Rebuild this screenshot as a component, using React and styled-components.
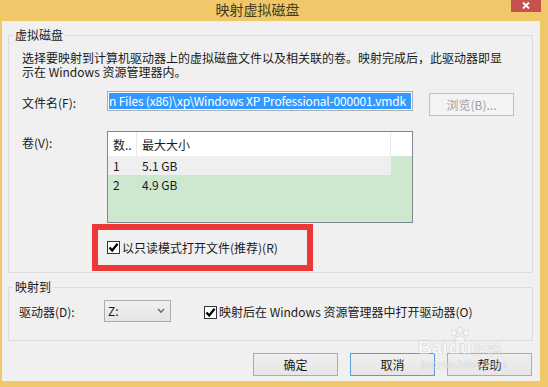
import React from 'react';
import styled, { createGlobalStyle } from 'styled-components';

const Global = createGlobalStyle`
  * { box-sizing: border-box; }
  html, body { margin: 0; padding: 0; width: 548px; height: 387px; overflow: hidden; background: #F0C869; }
  body {
    font-family: "Noto Sans CJK SC", "Noto Sans", sans-serif;
    font-size: 12px;
    color: #1a1a1a;
  }
`;

const Window = styled.div`
  position: relative;
  width: 548px;
  height: 387px;
  background: #F0C869;
  display: flex;
  flex-direction: column;
`;

const TitleBar = styled.div`
  height: 21px;
  flex: none;
  display: flex;
  align-items: flex-start;
  padding-right: 7px;
`;

const Title = styled.div`
  flex: 1;
  text-align: center;
  padding-left: 4px;
  font-size: 14px;
  line-height: 18px;
  color: #45391f;
`;

const CloseButton = styled.div`
  width: 30px;
  height: 12px;
  background: #C75050;
  display: flex;
  align-items: flex-start;
  justify-content: center;
  padding-top: 2px;
`;

const Body = styled.div`
  flex: 1;
  margin: 0 8px 6px 2px;
  background: #F0F0F0;
  padding: 6px 7px 0 6px;
  display: flex;
  flex-direction: column;
`;

const Group = styled.fieldset`
  margin: ${p => p.$mt || 0}px 0 0 0;
  padding: 0;
  border: 1px solid #DCDCDC;
  min-width: 0;
`;

const Legend = styled.legend`
  margin-left: 4px;
  padding: 0 2px;
  font-size: 12px;
  line-height: 16px;
  color: #1a1a1a;
`;

const GroupInner = styled.div`
  padding: ${p => p.$pad};
  display: flex;
  flex-direction: column;
`;

const Description = styled.div`
  line-height: 14px;
  margin-bottom: 12px;
`;

const FieldRow = styled.div`
  display: flex;
  align-items: flex-start;
  margin-bottom: ${p => p.$mb || 0}px;
`;

const FieldLabel = styled.div`
  width: ${p => p.$w}px;
  flex: none;
  line-height: 16px;
  margin-top: ${p => p.$mt || 0}px;
`;

const TextInput = styled.div`
  width: 306px;
  height: 20px;
  border: 1px solid #ABADB3;
  background: #fff;
  padding: 1px;
  overflow: hidden;
`;

const Selection = styled.div`
  height: 16px;
  background: #3399FF;
  color: #fff;
  white-space: nowrap;
  overflow: hidden;
  line-height: 16px;
  letter-spacing: -0.18px;
`;

const PushButton = styled.div`
  width: 85px;
  height: 23px;
  flex: none;
  border: 1px solid ${p => (p.$focused ? '#569DE5' : p.$disabled ? '#BFBFBF' : '#ACACAC')};
  background: ${p => (p.$disabled ? '#F4F4F4' : 'linear-gradient(#F0F0F0, #E5E5E5)')};
  color: ${p => (p.$disabled ? '#A0A0A0' : '#1a1a1a')};
  display: flex;
  align-items: center;
  justify-content: center;
  line-height: 16px;
  margin-left: ${p => p.$ml || 0}px;
  margin-top: ${p => p.$mt || 0}px;
`;

const ListBox = styled.div`
  width: 306px;
  height: 92px;
  border: 1px solid #828790;
  background: #CDE8CF;
  display: flex;
  flex-direction: column;
`;

const ListHeader = styled.div`
  height: 24px;
  background: #fff;
  display: flex;
  flex: none;
`;

const HeaderCell = styled.div`
  width: ${p => p.$w}px;
  flex: ${p => (p.$w ? 'none' : '1')};
  padding: 5px 0 0 5px;
  line-height: 16px;
  border-right: ${p => (p.$last ? 'none' : '1px solid #E8E8E8')};
  white-space: nowrap;
`;

const ListRow = styled.div`
  width: 283px;
  height: 19px;
  display: flex;
  line-height: 19px;
  background: ${p => (p.$selected ? '#EFEFEF' : 'transparent')};
`;

const Cell = styled.div`
  width: ${p => p.$w}px;
  padding-left: 5px;
  flex: none;
`;

const Highlight = styled.div`
  width: 221px;
  height: 47px;
  margin: 1px 0 1px 70px;
  border: 6px solid #EE3838;
  display: flex;
  align-items: center;
  padding-left: 9px;
`;

const CheckRow = styled.label`
  display: flex;
  align-items: center;
  gap: 2px;
  line-height: 16px;
  margin-left: ${p => p.$ml || 0}px;
  margin-top: ${p => p.$mt || 0}px;
`;

const Box = styled.span`
  width: 13px;
  height: 13px;
  border: 1px solid #333;
  background: #fff;
  display: inline-flex;
  align-items: center;
  justify-content: center;
  flex: none;
`;

const Combo = styled.div`
  width: 67px;
  height: 22px;
  border: 1px solid #ACACAC;
  background: linear-gradient(#F0F0F0, #E5E5E5);
  display: flex;
  align-items: center;
  justify-content: space-between;
  padding: 0 5px 0 3px;
  line-height: 16px;
`;

const ButtonRow = styled.div`
  display: flex;
  justify-content: flex-end;
  gap: 12px;
  margin-top: 12px;
  padding-right: 1px;
`;

const Watermark = styled.div`
  position: absolute;
  left: 418px;
  top: 325px;
  width: 110px;
  height: 50px;
  opacity: 0.45;
  pointer-events: none;
  font-family: "Liberation Sans", Arial, sans-serif;
  color: #fff;
  text-shadow: 0 0 1px #9a9a9a, 0 0 1px #9a9a9a;
`;

const WmLogo = styled.div`
  display: flex;
  align-items: flex-end;
  height: 34px;
  font-weight: bold;
  font-size: 19px;
  line-height: 22px;
`;

const WmCn = styled.span`
  font-family: "Noto Sans CJK SC", sans-serif;
  font-size: 14px;
  font-weight: normal;
  margin-left: 2px;
  line-height: 20px;
`;

const WmUrl = styled.div`
  font-size: 10px;
  line-height: 12px;
  padding-left: 3px;
  letter-spacing: 0.3px;
`;

const Check = () => (
  <Box>
    <svg width="11" height="11" viewBox="0 0 11 11">
      <path d="M1.5 5.5 L4.2 8.5 L9.6 1.8" stroke="#000" strokeWidth="2.2" fill="none" />
    </svg>
  </Box>
);

export default function App() {
  return (
    <>
      <Global />
      <Window>
        <TitleBar>
          <Title>映射虚拟磁盘</Title>
          <CloseButton>
            <svg width="8" height="7" viewBox="0 0 8 7">
              <path d="M1 0.5 L7 6.5 M7 0.5 L1 6.5" stroke="#fff" strokeWidth="1.8" />
            </svg>
          </CloseButton>
        </TitleBar>
        <Body>
          <Group>
            <Legend>虚拟磁盘</Legend>
            <GroupInner $pad="8px 0 0 13px">
              <Description>
                选择要映射到计算机驱动器上的虚拟磁盘文件以及相关联的卷。映射完成后，此驱动器即显
                <br />
                示在 Windows 资源管理器内。
              </Description>
              <FieldRow $mb={15}>
                <FieldLabel $w={85} $mt={4}>文件名(F):</FieldLabel>
                <TextInput>
                  <Selection>n Files (x86)\xp\Windows XP Professional-000001.vmdk</Selection>
                </TextInput>
                <PushButton $disabled $ml={16} $mt={2}>浏览(B)...</PushButton>
              </FieldRow>
              <FieldRow>
                <FieldLabel $w={85} $mt={4}>卷(V):</FieldLabel>
                <ListBox>
                  <ListHeader>
                    <HeaderCell $w={29}>数..</HeaderCell>
                    <HeaderCell $w={254}>最大大小</HeaderCell>
                    <HeaderCell $last />
                  </ListHeader>
                  <ListRow $selected>
                    <Cell $w={29}>1</Cell>
                    <Cell $w={254}>5.1 GB</Cell>
                  </ListRow>
                  <ListRow>
                    <Cell $w={29}>2</Cell>
                    <Cell $w={254}>4.9 GB</Cell>
                  </ListRow>
                </ListBox>
              </FieldRow>
              <Highlight>
                <CheckRow>
                  <Check />
                  以只读模式打开文件(推荐)(R)
                </CheckRow>
              </Highlight>
            </GroupInner>
          </Group>
          <Group $mt={6}>
            <Legend>映射到</Legend>
            <GroupInner $pad="5px 0 18px 10px">
              <FieldRow>
                <FieldLabel $w={85} $mt={4}>驱动器(D):</FieldLabel>
                <Combo>
                  <span>Z:</span>
                  <svg width="8" height="6" viewBox="0 0 8 6">
                    <path d="M1 1 L4 4.2 L7 1" stroke="#6d6d6d" strokeWidth="1.6" fill="none" />
                  </svg>
                </Combo>
                <CheckRow $ml={33} $mt={4}>
                  <Check />
                  映射后在 Windows 资源管理器中打开驱动器(O)
                </CheckRow>
              </FieldRow>
            </GroupInner>
          </Group>
          <ButtonRow>
            <PushButton>确定</PushButton>
            <PushButton $focused>取消</PushButton>
            <PushButton>帮助</PushButton>
          </ButtonRow>
        </Body>
        <Watermark>
          <WmLogo>
            <span>Bai</span>
            <svg width="22" height="32" viewBox="0 0 22 32" style={{ marginLeft: 1 }}>
              <g fill="#fff" stroke="#9a9a9a" strokeWidth="0.6">
                <ellipse cx="5" cy="6" rx="2.6" ry="3.2" />
                <ellipse cx="11" cy="3.5" rx="2.6" ry="3.2" />
                <ellipse cx="17" cy="6" rx="2.6" ry="3.2" />
                <ellipse cx="11" cy="13" rx="5" ry="4" />
              </g>
            </svg>
            <span style={{ marginLeft: -22 }}>du</span>
            <WmCn>经验</WmCn>
          </WmLogo>
          <WmUrl>jingyan.baidu.com</WmUrl>
        </Watermark>
      </Window>
    </>
  );
}
